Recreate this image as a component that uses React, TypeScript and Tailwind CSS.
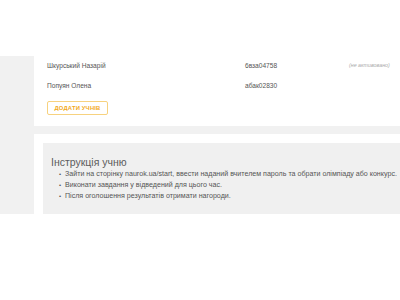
const students = [
  { name: 'Шкурський Назарій', code: '6вза04758', status: '(не активовано)' },
  { name: 'Попуян Олена', code: 'абак02830', status: '' },
];

const steps = [
  'Зайти на сторінку naurok.ua/start, ввести наданий вчителем пароль та обрати олімпіаду або конкурс.',
  'Виконати завдання у відведений для цього час.',
  'Після оголошення результатів отримати нагороди.',
];

export default function App() {
  return (
    <div className="w-[400px] h-[300px] overflow-hidden bg-white font-['Liberation_Sans',Arial,sans-serif] text-[#555]">
      {/* Header */}
      <div className="h-[57px] bg-white border-b border-[#ececec]" />

      <div className="bg-[#f1f1f1] pl-[34px]">
        {/* Students card */}
        <div className="bg-white pl-[13px] pb-[11px] -mt-[1px]">
          {students.map((s) => (
            <div key={s.code} className="flex items-center h-[20px] text-[6.6px]">
              <span className="w-[198px]">{s.name}</span>
              <span className="w-[104px]">{s.code}</span>
              <span className="italic text-[5.3px] text-[#aaa]">{s.status}</span>
            </div>
          ))}
          <button className="block mt-[5px] h-[14px] w-[61px] border border-[#f7d27f] rounded-[2px] text-[5.8px] font-bold text-[#f2a922] tracking-[0.2px]">
            ДОДАТИ УЧНІВ
          </button>
        </div>

        {/* Instruction card */}
        <div className="mt-[8px] bg-white pl-[9px] pt-[9px]">
          <div className="bg-[#f0f0f0] pl-[8px] pt-[13px] h-[71px]">
            <h3 className="text-[10.5px] leading-[12px] text-[#5c5c5c] font-normal">Інструкція учню</h3>
            <ul className="mt-[1px] pl-[8px] text-[7.1px] leading-[11px] whitespace-nowrap">
              {steps.map((t) => (
                <li key={t} className="flex items-center">
                  <span className="w-[6px] text-[6px]">•</span>
                  <span>{t}</span>
                </li>
              ))}
            </ul>
          </div>
        </div>
      </div>
    </div>
  );
}
